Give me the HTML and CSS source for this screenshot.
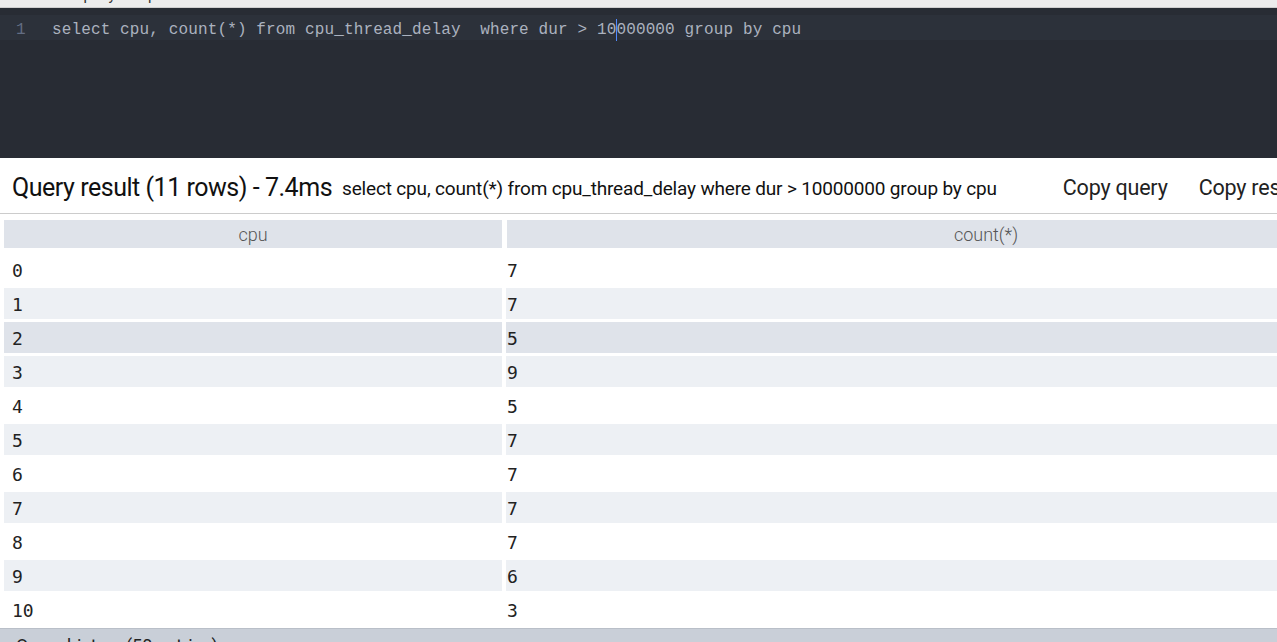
FILE: index.html
```html
<!DOCTYPE html>
<html>
<head>
<meta charset="utf-8">
<link rel="stylesheet" href="styles.css">
</head>
<body>
<div class="page">
  <div class="topbar"><span class="topbar-text">Enter query and press Ctrl Enter</span></div>
  <div class="editor">
    <div class="line active">
      <span class="gutter">1</span>
      <span class="code">select cpu, count(*) from cpu_thread_delay&nbsp; where dur &gt; 10<span class="cursor"></span>000000 group by cpu</span>
    </div>
  </div>
  <div class="result-header">
    <span class="title">Query result (11 rows) - 7.4ms</span>
    <span class="query">select cpu, count(*) from cpu_thread_delay where dur &gt; 10000000 group by cpu</span>
    <span class="spacer"></span>
    <button class="btn">Copy query</button>
    <button class="btn">Copy result (.tsv)</button>
  </div>
  <div class="table">
    <div class="thead">
      <div class="th c1">cpu</div>
      <div class="th c2">count(*)</div>
    </div>
    <div class="tbody">
      <div class="tr"><div class="td c1">0</div><div class="td c2">7</div></div>
      <div class="tr"><div class="td c1">1</div><div class="td c2">7</div></div>
      <div class="tr hover"><div class="td c1">2</div><div class="td c2">5</div></div>
      <div class="tr"><div class="td c1">3</div><div class="td c2">9</div></div>
      <div class="tr"><div class="td c1">4</div><div class="td c2">5</div></div>
      <div class="tr"><div class="td c1">5</div><div class="td c2">7</div></div>
      <div class="tr"><div class="td c1">6</div><div class="td c2">7</div></div>
      <div class="tr"><div class="td c1">7</div><div class="td c2">7</div></div>
      <div class="tr"><div class="td c1">8</div><div class="td c2">7</div></div>
      <div class="tr"><div class="td c1">9</div><div class="td c2">6</div></div>
      <div class="tr"><div class="td c1">10</div><div class="td c2">3</div></div>
    </div>
  </div>
  <div class="history"><span class="history-text">Query history (50 entries)</span></div>
</div>
</body>
</html>
```
FILE: styles.css
```css
html, body {
  margin: 0;
  padding: 0;
  background: #ffffff;
  overflow: hidden;
  width: 1277px;
  height: 642px;
}
.page {
  width: 1470px;
  font-family: Roboto, "Noto Sans", sans-serif;
  color: #111;
}
.topbar {
  height: 7px;
  background: #ececec;
  border-bottom: 1px solid #cfcfcf;
  overflow: hidden;
  position: relative;
}
.topbar-text {
  display: block;
  padding-left: 40px;
  margin-top: -13px;
  font-size: 15px;
  line-height: 16px;
  color: #333;
}
.editor {
  height: 143px;
  background: #282c34;
  padding-top: 7px;
}
.line {
  height: 25px;
  display: flex;
  align-items: center;
  padding-top: 4px;
  box-sizing: border-box;
  font-family: "Liberation Mono", "Noto Sans CJK SC", monospace;
  font-size: 16px;
  letter-spacing: 0.13px;
  color: #abb2bf;
}
.line.active {
  background: #2c313a;
}
.gutter {
  width: 52px;
  padding-left: 16px;
  box-sizing: border-box;
  color: #636d83;
}
.code {
  white-space: pre;
  position: relative;
}
.cursor {
  display: inline-block;
  width: 0;
  height: 22px;
  border-left: 1px solid #528bff;
  vertical-align: middle;
  margin-right: -1px;
}
.result-header {
  height: 56px;
  display: flex;
  align-items: center;
  border-bottom: 1px solid #cccccc;
  padding: 3px 0 0 12px;
  box-sizing: border-box;
}
.title {
  font-size: 25px;
  letter-spacing: -0.47px;
  color: #111;
}
.query {
  margin-left: 10px;
  font-size: 19px;
  letter-spacing: -0.17px;
  color: #111;
  padding-top: 3px;
}
.spacer {
  width: 66px;
}
.btn {
  font-family: Roboto, "Noto Sans", sans-serif;
  font-size: 21.5px;
  background: none;
  border: none;
  padding: 0;
  margin-right: 31px;
  color: #222;
  letter-spacing: -0.2px;
}
.table {
  padding: 6px 0 0 4px;
}
.thead {
  display: flex;
  gap: 5px;
  margin-bottom: 6px;
}
.th {
  height: 28px;
  background: #dfe3ea;
  display: flex;
  align-items: center;
  justify-content: center;
  font-size: 18px;
  font-weight: 300;
  color: #555;
}
.c1 { width: 498px; }
.c2 { width: 958px; }
.tbody {
  display: flex;
  flex-direction: column;
  gap: 3px;
}
.tr {
  display: flex;
  gap: 4px;
}
.td {
  height: 31px;
  display: flex;
  align-items: center;
  padding-top: 2px;
  font-family: "DejaVu Sans Mono", monospace;
  font-size: 18px;
  color: #222;
  background: #ffffff;
  box-sizing: border-box;
}
.td.c1 { padding-left: 8px; }
.td.c2 { padding-left: 1px; }
.tr:nth-child(even) .td { background: #edf0f4; }
.tr.hover .td { background: #dfe3ea; }
.history {
  margin-top: 3px;
  height: 40px;
  background: #c9cfd8;
  border-top: 1px solid #b9bfc8;
  overflow: hidden;
}
.history-text {
  display: block;
  padding: 6px 0 0 16px;
  font-size: 18px;
  color: #222;
}
```
